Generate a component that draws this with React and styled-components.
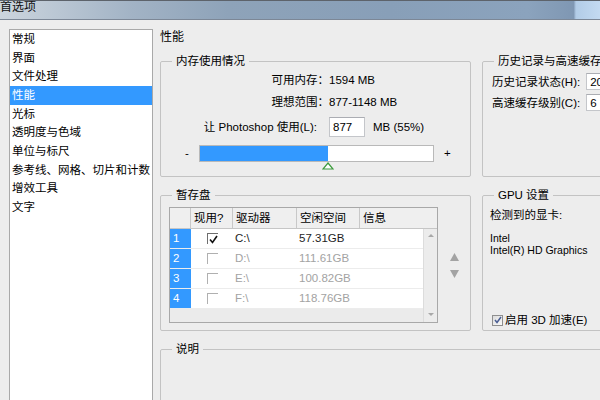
import React from 'react';
import styled, { createGlobalStyle } from 'styled-components';

// --- Global ---

const GlobalStyle = createGlobalStyle`
  html, body {
    margin: 0;
    padding: 0;
  }
  body {
    background: #ededed;
    font-family: "Liberation Sans", "Noto Sans CJK SC", sans-serif;
    font-size: 11.5px;
    line-height: 14px;
    color: #000;
    overflow: hidden;
  }
`;

// --- Window frame ---

const Window = styled.div`
  width: 600px;
  height: 400px;
  overflow: hidden;
  display: flex;
  flex-direction: column;
  background: #ededed;
`;

const TitleBar = styled.div`
  height: 18px;
  flex-shrink: 0;
  border-top: 1px solid #5d636b;
  border-bottom: 1px solid #7c8796;
  background: linear-gradient(
    90deg,
    #ccd5de 0%,
    #b9c6d3 10%,
    #a2b3c5 22%,
    #8ea3b9 38%,
    #889fb8 65%,
    #8ba3bd 88%,
    #7f97b3 95.6%,
    #b2cce7 96%,
    #c3daf1 100%
  );
  overflow: hidden;
`;

const TitleText = styled.div`
  margin-top: -1px;
  font-size: 12px;
  line-height: 14px;
  color: #111;
`;

const Body = styled.div`
  flex: 1;
  display: flex;
  min-height: 0;
`;

// --- Category list ---

const Sidebar = styled.ul`
  margin: 9px 0 0 9px;
  padding: 0;
  list-style: none;
  width: 142px;
  flex-shrink: 0;
  background: #fff;
  border: 1px solid #a9a9a9;
  border-bottom: none;
`;

const SideItem = styled.li`
  height: 18.67px;
  line-height: 18.67px;
  padding-left: 2px;
  white-space: nowrap;
  background: ${p => (p.$selected ? '#3399ff' : 'transparent')};
  color: ${p => (p.$selected ? '#fff' : '#000')};
`;

// --- Main panel ---

const Main = styled.main`
  margin-left: 7px;
  padding-top: 10px;
  flex-shrink: 0;
`;

const PageTitle = styled.div`
  font-size: 12px;
  line-height: 14px;
  margin-bottom: 10px;
`;

const Panels = styled.div`
  display: grid;
  grid-template-columns: 311px 240px;
  grid-template-rows: 123px 143px 120px;
  gap: 11px;
`;

const Group = styled.fieldset`
  margin: 0;
  padding: 0;
  min-width: 0;
  border: 1px solid #c3c3c3;
  border-radius: 2px;
  box-sizing: border-box;
  grid-column: ${p => (p.$span ? '1 / -1' : 'auto')};
`;

const Legend = styled.legend`
  margin-left: 11px;
  padding: 0 4px;
  font-size: 11.5px;
  line-height: 14px;
`;

// --- Memory ---

const MemRow = styled.div`
  display: flex;
  align-items: center;
  height: 20px;
  margin-top: ${p => p.$gap}px;
`;

const MemLabel = styled.span`
  width: 168px;
  box-sizing: border-box;
  padding-right: ${p => p.$pad || 0}px;
  text-align: right;
  white-space: nowrap;
`;

const MemValue = styled.span`
  white-space: nowrap;
`;

const NumInput = styled.input`
  width: ${p => p.$w || 36}px;
  height: ${p => p.$h || 20}px;
  box-sizing: border-box;
  margin: 0;
  padding: 0 3px;
  border: 1px solid #c4c6ca;
  border-top-color: #abadb3;
  background: #fff;
  font: inherit;
  color: #000;
  outline: none;
`;

const Unit = styled.span`
  margin-left: 8px;
  white-space: nowrap;
`;

const SliderRow = styled.div`
  display: flex;
  align-items: center;
  height: 17px;
  margin-top: 8px;
  padding-left: 24px;
`;

const Sign = styled.span`
  width: 14px;
  line-height: 17px;
  margin-left: ${p => p.$after || 0}px;
`;

const Track = styled.div`
  position: relative;
  width: 235px;
  height: 17px;
  box-sizing: border-box;
  border: 1px solid #b9b9b9;
  background: #fff;
`;

const Fill = styled.div`
  height: 100%;
  background: #3399ff;
`;

const Thumb = styled.svg`
  position: absolute;
  top: 100%;
  margin-top: 1px;
  margin-left: -6px;
`;

// --- History ---

const HistList = styled.div`
  display: flex;
  flex-direction: column;
  gap: 4px;
  padding: 5px 0 0 9px;
`;

const HistRow = styled.div`
  display: flex;
  align-items: center;
  gap: 6px;
  height: 17px;
  white-space: nowrap;
`;

// --- Scratch disks ---

const ScratchBody = styled.div`
  display: flex;
  padding: 5px 0 0 8px;
`;

const Table = styled.div`
  width: 271px;
  height: 116px;
  box-sizing: border-box;
  border: 1px solid #a8a8a8;
  background: #ebebeb;
  display: flex;
  flex-direction: column;
`;

const cols = '21px 42px 64px 63px 1fr';

const HeadRow = styled.div`
  display: grid;
  grid-template-columns: ${cols};
  height: 20px;
  flex-shrink: 0;
  border-bottom: 1px solid #c6c6c6;
  background: #efefef;
`;

const HeadCell = styled.div`
  border-right: 1px solid #c8c8c8;
  padding-left: 3px;
  line-height: 20px;
  white-space: nowrap;
  &:last-child {
    border-right: none;
  }
`;

const TableBody = styled.div`
  flex: 1;
  display: flex;
  min-height: 0;
`;

const RowsArea = styled.div`
  flex: 1;
  display: flex;
  flex-direction: column;
`;

const Row = styled.div`
  display: grid;
  grid-template-columns: ${cols};
  height: 20px;
  box-sizing: border-box;
  border-bottom: 1px solid #ececec;
  background: #fff;
  color: ${p => (p.$dim ? '#a3a3a3' : '#1e1e1e')};
`;

const IndexCell = styled.div`
  background: #3399ff;
  color: #fff;
  padding-left: 3px;
  line-height: 19px;
`;

const CheckCell = styled.div`
  display: flex;
  align-items: center;
  justify-content: center;
`;

const GridCheck = styled.span`
  position: relative;
  width: 10px;
  height: 10px;
  border-top: 1px solid ${p => (p.$on ? '#6e6e6e' : '#b0b0b0')};
  border-left: 1px solid ${p => (p.$on ? '#6e6e6e' : '#b0b0b0')};
  svg {
    position: absolute;
    left: 1px;
    top: 1px;
  }
`;

const Cell = styled.div`
  padding-left: 2px;
  line-height: 19px;
  white-space: nowrap;
`;

const ScrollBar = styled.div`
  width: 13px;
  flex-shrink: 0;
  border-left: 1px solid #dcdcdc;
  background: #ececec;
  display: flex;
  flex-direction: column;
  justify-content: space-between;
  align-items: center;
  padding: 5px 0 6px;
`;

const ArrowCol = styled.div`
  width: 32px;
  display: flex;
  flex-direction: column;
  align-items: center;
  gap: 9px;
  padding-top: 46px;
`;

// --- GPU ---

const GpuBody = styled.div`
  padding: 6px 0 0 7px;
`;

const GpuInfo = styled.div`
  margin-top: 10px;
  font-size: 10.5px;
  line-height: 12px;
  white-space: nowrap;
`;

const CheckRow = styled.label`
  display: flex;
  align-items: center;
  gap: 2px;
  height: 14px;
  margin-top: 57px;
  padding-left: 2px;
  white-space: nowrap;
`;

const WinCheck = styled.span`
  width: 11px;
  height: 11px;
  box-sizing: border-box;
  border: 1px solid #8f8f8f;
  background: linear-gradient(135deg, #dcdcdc, #fafafa);
  display: flex;
  align-items: center;
  justify-content: center;
`;

// --- Data ---

const categories = [
  '常规',
  '界面',
  '文件处理',
  '性能',
  '光标',
  '透明度与色域',
  '单位与标尺',
  '参考线、网格、切片和计数',
  '增效工具',
  '文字',
];

const disks = [
  { id: 1, on: true, drive: 'C:\\', free: '57.31GB' },
  { id: 2, on: false, drive: 'D:\\', free: '111.61GB' },
  { id: 3, on: false, drive: 'E:\\', free: '100.82GB' },
  { id: 4, on: false, drive: 'F:\\', free: '118.76GB' },
];

const memPct = 55;

const Tri = ({ down, w = 9, h = 8, color = '#a3a3a3' }) => (
  <svg width={w} height={h} viewBox={`0 0 ${w} ${h}`}>
    <polygon
      points={down ? `0,0 ${w},0 ${w / 2},${h}` : `${w / 2},0 ${w},${h} 0,${h}`}
      fill={color}
    />
  </svg>
);

// --- Component ---

const App = () => (
  <Window>
    <GlobalStyle />
    <TitleBar>
      <TitleText>首选项</TitleText>
    </TitleBar>
    <Body>
      <Sidebar>
        {categories.map(c => (
          <SideItem key={c} $selected={c === '性能'}>
            {c}
          </SideItem>
        ))}
      </Sidebar>

      <Main>
        <PageTitle>性能</PageTitle>
        <Panels>
          <Group>
            <Legend>内存使用情况</Legend>
            <MemRow $gap={2}>
              <MemLabel>可用内存：</MemLabel>
              <MemValue>1594 MB</MemValue>
            </MemRow>
            <MemRow $gap={2}>
              <MemLabel>理想范围：</MemLabel>
              <MemValue>877-1148 MB</MemValue>
            </MemRow>
            <MemRow $gap={5}>
              <MemLabel $pad={12}>让 Photoshop 使用(L):</MemLabel>
              <NumInput value="877" readOnly />
              <Unit>MB ({memPct}%)</Unit>
            </MemRow>
            <SliderRow>
              <Sign>-</Sign>
              <Track>
                <Fill style={{ width: `${memPct}%` }} />
                <Thumb width="12" height="8" viewBox="0 0 12 8" style={{ left: `${memPct}%` }}>
                  <polygon points="6,1 11,7 1,7" fill="#fff" stroke="#3c9a3c" strokeWidth="1.2" />
                </Thumb>
              </Track>
              <Sign $after={10}>+</Sign>
            </SliderRow>
          </Group>

          <Group>
            <Legend>历史记录与高速缓存</Legend>
            <HistList>
              <HistRow>
                历史记录状态(H):
                <NumInput $w={40} $h={17} value="20" readOnly />
              </HistRow>
              <HistRow>
                高速缓存级别(C):
                <NumInput $w={40} $h={17} value="6" readOnly />
              </HistRow>
            </HistList>
          </Group>

          <Group>
            <Legend>暂存盘</Legend>
            <ScratchBody>
              <Table>
                <HeadRow>
                  <HeadCell />
                  <HeadCell>现用?</HeadCell>
                  <HeadCell>驱动器</HeadCell>
                  <HeadCell>空闲空间</HeadCell>
                  <HeadCell>信息</HeadCell>
                </HeadRow>
                <TableBody>
                  <RowsArea>
                    {disks.map(d => (
                      <Row key={d.id} $dim={!d.on}>
                        <IndexCell>{d.id}</IndexCell>
                        <CheckCell>
                          <GridCheck $on={d.on}>
                            {d.on && (
                              <svg width="9" height="9" viewBox="0 0 9 9">
                                <path d="M1 4.5 L3.5 7.5 L8 1" fill="none" stroke="#111" strokeWidth="1.6" />
                              </svg>
                            )}
                          </GridCheck>
                        </CheckCell>
                        <Cell>{d.drive}</Cell>
                        <Cell>{d.free}</Cell>
                        <Cell />
                      </Row>
                    ))}
                  </RowsArea>
                  <ScrollBar>
                    <Tri w={6} h={3} color="#a8a8a8" />
                    <Tri down w={6} h={3} color="#a8a8a8" />
                  </ScrollBar>
                </TableBody>
              </Table>
              <ArrowCol>
                <Tri />
                <Tri down />
              </ArrowCol>
            </ScratchBody>
          </Group>

          <Group>
            <Legend>GPU 设置</Legend>
            <GpuBody>
              <div>检测到的显卡:</div>
              <GpuInfo>
                Intel
                <br />
                Intel(R) HD Graphics
              </GpuInfo>
              <CheckRow>
                <WinCheck>
                  <svg width="8" height="8" viewBox="0 0 8 8">
                    <path d="M1 4 L3 6.5 L7 1" fill="none" stroke="#4a5e94" strokeWidth="1.5" />
                  </svg>
                </WinCheck>
                启用 3D 加速(E)
              </CheckRow>
            </GpuBody>
          </Group>

          <Group $span>
            <Legend>说明</Legend>
          </Group>
        </Panels>
      </Main>
    </Body>
  </Window>
);

export default App;
